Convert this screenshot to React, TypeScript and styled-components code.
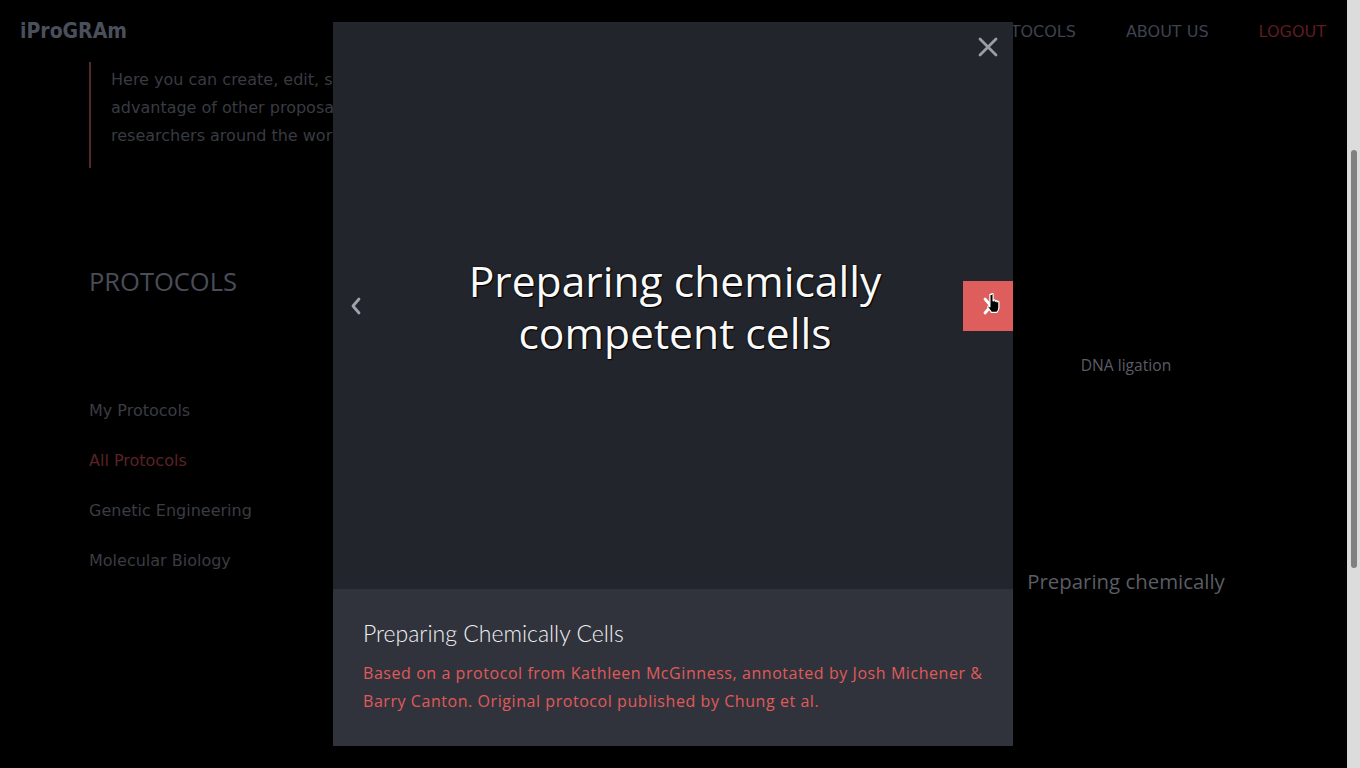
import React from "react";
import styled, { createGlobalStyle } from "styled-components";

const Global = createGlobalStyle`
  html, body { margin: 0; padding: 0; background: #000; overflow: hidden; }
  #root { width: 1360px; height: 768px; }
`;

const Shell = styled.div`
  display: flex;
  width: 1360px;
  height: 768px;
  background: #000;
`;

const Main = styled.div`
  position: relative;
  flex: 1;
  height: 768px;
  overflow: hidden;
`;

const Scrollbar = styled.div`
  width: 13px;
  background: #dcdcdc;
  display: flex;
  justify-content: center;
  padding-top: 150px;
  box-sizing: border-box;
`;

const Thumb = styled.div`
  width: 6px;
  height: 418px;
  border-radius: 3px;
  background: #808080;
`;

const Header = styled.header`
  display: flex;
  align-items: center;
  height: 62px;
  padding: 0 21px 0 20px;
`;

const Logo = styled.div`
  font-family: "DejaVu Sans Condensed", "DejaVu Sans", sans-serif;
  font-stretch: condensed;
  font-weight: 700;
  font-size: 21px;
  color: #4a4f5c;
`;

const Nav = styled.nav`
  margin-left: auto;
  display: flex;
  gap: 50px;
`;

const NavLink = styled.a<{ $danger?: boolean }>`
  font-family: "DejaVu Sans", sans-serif;
  font-size: 16px;
  color: ${(p) => (p.$danger ? "#5c1c20" : "#3e4251")};
  text-decoration: none;
`;

const Content = styled.div`
  padding-left: 89px;
`;

const Intro = styled.blockquote`
  margin: 0;
  border-left: 2px solid #55282b;
  padding: 4px 0 18px 20px;
  font-family: "DejaVu Sans", sans-serif;
  font-size: 16px;
  line-height: 28px;
  white-space: nowrap;
  color: #393b42;
`;

const Section = styled.section`
  display: flex;
  margin-top: 98px;
`;

const Sidebar = styled.aside`
  width: 260px;
`;

const SectionTitle = styled.h2`
  margin: 0;
  font-family: "Open Sans", sans-serif;
  font-weight: 400;
  font-size: 25.5px;
  line-height: 30px;
  color: #4a4d57;
`;

const CatList = styled.ul`
  list-style: none;
  margin: 105px 0 0;
  padding: 0;
  display: flex;
  flex-direction: column;
  gap: 30px;
`;

const CatItem = styled.li<{ $active?: boolean }>`
  font-family: "DejaVu Sans", sans-serif;
  font-size: 16px;
  line-height: 20px;
  color: ${(p) => (p.$active ? "#5a2226" : "#3a3c43")};
`;

const Cards = styled.div`
  margin-left: auto;
  margin-right: 121px;
  width: 200px;
  display: flex;
  flex-direction: column;
  align-items: center;
`;

const CardTitle = styled.div`
  margin-top: 89px;
  font-family: "Open Sans", sans-serif;
  font-size: 15.6px;
  line-height: 20px;
  color: #5a5d64;
`;

const CardImageText = styled.div`
  margin-top: 193px;
  font-family: "Open Sans", sans-serif;
  font-size: 20.4px;
  line-height: 26px;
  color: #5a5d64;
  white-space: nowrap;
`;

const Overlay = styled.div`
  position: absolute;
  inset: 0;
  padding-right: 1px;
  display: flex;
  align-items: center;
  justify-content: center;
`;

const Modal = styled.div`
  width: 680px;
  height: 724px;
  display: flex;
  flex-direction: column;
  background: #23252d;
  position: relative;
`;

const Stage = styled.div`
  height: 567px;
  display: flex;
  align-items: center;
  justify-content: center;
  position: relative;
`;

const StageTitle = styled.h1`
  margin: 0;
  padding-left: 4px;
  font-family: "Open Sans", sans-serif;
  font-weight: 400;
  font-size: 42.6px;
  line-height: 52px;
  text-align: center;
  color: #fafafa;
  text-shadow: 0 0 2px #000, 1px 1px 1px #000;
`;

const Caption = styled.div`
  flex: 1;
  background: #30333b;
  padding: 28px 30px 0;
`;

const CaptionTitle = styled.h3`
  margin: 0;
  font-family: "Lato", sans-serif;
  font-weight: 300;
  font-size: 23px;
  line-height: 32px;
  color: #f0f0f2;
`;

const CaptionText = styled.p`
  margin: 10px 0 0;
  font-family: "Open Sans", sans-serif;
  font-size: 16px;
  letter-spacing: 0.56px;
  line-height: 28px;
  color: #e05a5a;
`;

const CloseButton = styled.button`
  position: absolute;
  top: 13px;
  right: 13px;
  width: 24px;
  height: 24px;
  padding: 0;
  border: 0;
  background: transparent;
  display: flex;
  align-items: center;
  justify-content: center;
`;

const ArrowButton = styled.button<{ $side: "left" | "right"; $active?: boolean }>`
  position: absolute;
  top: 259px;
  ${(p) => (p.$side === "left" ? "left: 0; padding: 0 4px 0 0;" : "right: 0; padding: 0;")}
  width: 50px;
  height: 50px;
  border: 0;
  background: ${(p) => (p.$active ? "#de5d5d" : "transparent")};
  display: flex;
  align-items: center;
  justify-content: center;
`;

const Pointer = styled.svg`
  position: absolute;
  left: 22px;
  top: 11px;
`;

export default function App() {
  return (
    <>
      <Global />
      <Shell>
        <Main>
          <Header>
            <Logo>iProGRAm</Logo>
            <Nav>
              <NavLink>PROTOCOLS</NavLink>
              <NavLink>ABOUT US</NavLink>
              <NavLink $danger>LOGOUT</NavLink>
            </Nav>
          </Header>
          <Content>
            <Intro>
              Here you can create, edit, share and take
              <br />
              advantage of other proposals made by other
              <br />
              researchers around the world.
            </Intro>
            <Section>
              <Sidebar>
                <SectionTitle>PROTOCOLS</SectionTitle>
                <CatList>
                  <CatItem>My Protocols</CatItem>
                  <CatItem $active>All Protocols</CatItem>
                  <CatItem>Genetic Engineering</CatItem>
                  <CatItem>Molecular Biology</CatItem>
                </CatList>
              </Sidebar>
              <Cards>
                <CardTitle>DNA ligation</CardTitle>
                <CardImageText>Preparing chemically</CardImageText>
              </Cards>
            </Section>
          </Content>
          <Overlay>
            <Modal>
              <Stage>
                <StageTitle>
                  Preparing chemically
                  <br />
                  competent cells
                </StageTitle>
                <ArrowButton $side="left" aria-label="Previous">
                  <svg width="14" height="20" viewBox="0 0 14 20">
                    <polyline points="10,3 4,10 10,17" fill="none" stroke="#9ea2aa" strokeWidth="2.8" strokeLinecap="round" strokeLinejoin="round" />
                  </svg>
                </ArrowButton>
                <ArrowButton $side="right" $active aria-label="Next">
                  <svg width="14" height="20" viewBox="0 0 14 20">
                    <polyline points="4,3 10,10 4,17" fill="none" stroke="#fff" strokeWidth="2.8" strokeLinecap="round" strokeLinejoin="round" />
                  </svg>
                  <Pointer width="17" height="22" viewBox="0 0 17 22">
                    <path
                      d="M5 1.5 C5 0.7 6.6 0.7 6.6 1.5 L6.6 8 L7 8 C7 6.8 8.8 6.8 8.8 8 L8.8 8.6 C8.8 7.6 10.6 7.6 10.6 8.6 L10.6 9.2 C10.6 8.3 12.4 8.3 12.4 9.2 L12.4 15 C12.4 17 11.4 18.5 10.4 19.5 L4.8 19.5 C3.8 18 2.6 16.5 1.4 14.6 C0.8 13.6 1.8 12.6 2.8 13.4 L3.4 14 L3.4 1.5 Z"
                      transform="translate(1.5 0.8)"
                      fill="#000"
                      stroke="#fff"
                      strokeWidth="1.2"
                      strokeLinejoin="round"
                    />
                  </Pointer>
                </ArrowButton>
              </Stage>
              <CloseButton aria-label="Close">
                <svg width="22" height="22" viewBox="0 0 22 22">
                  <path d="M3 3 L19 19 M19 3 L3 19" stroke="#9b9ea5" strokeWidth="2.8" strokeLinecap="round" />
                </svg>
              </CloseButton>
              <Caption>
                <CaptionTitle>Preparing Chemically Cells</CaptionTitle>
                <CaptionText>
                  Based on a protocol from Kathleen McGinness, annotated by Josh Michener &amp; Barry Canton. Original protocol published by Chung et al.
                </CaptionText>
              </Caption>
            </Modal>
          </Overlay>
        </Main>
        <Scrollbar>
          <Thumb />
        </Scrollbar>
      </Shell>
    </>
  );
}
